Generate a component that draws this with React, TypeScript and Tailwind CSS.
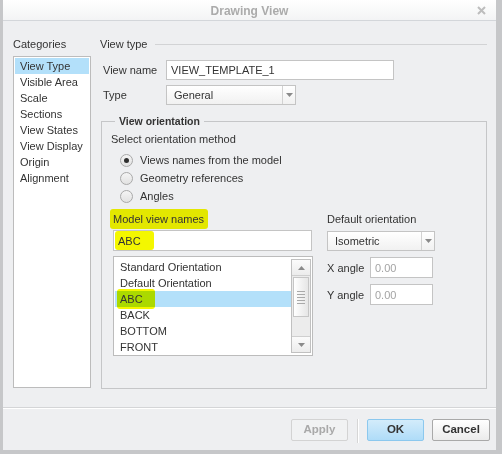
const font = { fontFamily: '"Liberation Sans", Arial, sans-serif' };

function Caret({ up = false }: { up?: boolean }) {
  return (
    <svg width="7" height="4" viewBox="0 0 7 4" className={up ? "rotate-180" : ""}>
      <path d="M0 0 L7 0 L3.5 4 Z" fill="#8a8a8a" />
    </svg>
  );
}

function Select({ value, width }: { value: string; width: string }) {
  return (
    <div
      className={`flex h-[20px] ${width} border border-[#c4c4c4] bg-gradient-to-b from-white to-[#f1f1f1]`}
    >
      <div className="flex flex-1 items-center pl-[7px] pt-px">{value}</div>
      <div className="flex w-[13px] items-center justify-center border-l border-[#d2d2d2]">
        <Caret />
      </div>
    </div>
  );
}

function Radio({ checked, label }: { checked?: boolean; label: string }) {
  return (
    <div className="flex h-[18px] items-center pl-[18px]">
      <div className="flex h-[13px] w-[13px] items-center justify-center rounded-full border border-[#a9a9a9] bg-gradient-to-b from-[#f4f4f4] to-[#e2e2e2]">
        {checked && <div className="h-[5px] w-[5px] rounded-full bg-[#2f2f2f]" />}
      </div>
      <span className="ml-[7px] pt-px">{label}</span>
    </div>
  );
}

function Marker({ children, extra = "-right-[4px]" }: { children: React.ReactNode; extra?: string }) {
  return (
    <span className="relative inline-block">
      <span
        className={`absolute -left-[3px] ${extra} -top-[2px] -bottom-[1px] rounded-[3px] bg-[#f4f700] mix-blend-multiply`}
      />
      <span className="relative">{children}</span>
    </span>
  );
}

const categories = [
  "View Type",
  "Visible Area",
  "Scale",
  "Sections",
  "View States",
  "View Display",
  "Origin",
  "Alignment",
];

const views = ["Standard Orientation", "Default Orientation", "ABC", "BACK", "BOTTOM", "FRONT"];

export default function App() {
  return (
    <div
      style={font}
      className="flex h-[454px] w-[502px] flex-col bg-[#c6c7c9] pb-[4px] pl-[3px] pr-[6px] text-[11px] text-[#333]"
    >
      <div className="flex flex-1 flex-col bg-[#eeeff1]">
        {/* title bar */}
        <div className="relative flex h-[21px] items-center justify-center border-b border-[#d3d6da] bg-gradient-to-b from-white to-[#f3f4f5]">
          <span className="pt-px text-[12px] font-bold text-[#ababab]">Drawing View</span>
          <svg width="9" height="9" viewBox="0 0 9 9" className="absolute right-[10px] top-[6px]">
            <path d="M1 1 L8 8 M8 1 L1 8" stroke="#bdbdbd" strokeWidth="2" />
          </svg>
        </div>

        {/* body */}
        <div className="flex h-[386px]">
          {/* categories */}
          <div className="ml-[10px] flex w-[78px] flex-col pt-[15px]">
            <div className="flex h-[16px] items-center pt-px">Categories</div>
            <div className="mt-[4px] h-[332px] border border-[#bcbcbc] bg-white p-[1px]">
              {categories.map((c, i) => (
                <div
                  key={c}
                  className={`flex h-[16px] items-center pl-[5px] pt-px ${i === 0 ? "bg-[#b3e0fa]" : ""}`}
                >
                  {c}
                </div>
              ))}
            </div>
          </div>

          {/* main */}
          <div className="ml-[9px] flex w-[387px] flex-col pt-[15px]">
            <div className="flex h-[16px] items-center">
              <span className="pt-px">View type</span>
              <div className="ml-[7px] h-px flex-1 bg-[#d2d3d5]" />
            </div>

            <div className="mt-[8px] flex h-[20px] items-center">
              <span className="w-[66px] pl-[3px] pt-px">View name</span>
              <div className="flex h-[20px] w-[228px] items-center border border-[#c4c4c4] bg-white pl-[4px] pt-px">
                VIEW_TEMPLATE_1
              </div>
            </div>

            <div className="mt-[5px] flex h-[20px] items-center">
              <span className="w-[66px] pl-[3px] pt-px">Type</span>
              <Select value="General" width="w-[130px]" />
            </div>

            <div className="relative ml-[1px] mt-[16px] h-[268px] border border-[#c5c6c8] pl-[11px] pt-[9px]">
              <span className="absolute -top-[8px] left-[13px] bg-[#eeeff1] px-[4px] text-[10.5px] font-bold">
                View orientation
              </span>
              <div className="-ml-[2px] flex h-[16px] items-center pt-px">Select orientation method</div>
              <div className="-ml-[11px] mt-[4px] flex flex-col">
                <Radio checked label="Views names from the model" />
                <Radio label="Geometry references" />
                <Radio label="Angles" />
              </div>

              <div className="mt-[6px] flex">
                {/* model views */}
                <div className="flex w-[200px] flex-col">
                  <div className="flex h-[16px] items-center pt-px">
                    <Marker>Model view names</Marker>
                  </div>
                  <div className="mt-[3px] flex h-[21px] w-[199px] items-center border border-[#c4c4c4] bg-white pl-[4px] pt-px">
                    <Marker extra="-right-[13px]">ABC</Marker>
                  </div>
                  <div className="mt-[5px] flex h-[100px] border border-[#bcbcbc] bg-white py-[2px] pl-[1px] pr-[1px]">
                    <div className="flex flex-1 flex-col">
                      {views.map((v, i) => (
                        <div
                          key={v}
                          className={`flex h-[16px] shrink-0 items-center pl-[5px] pt-px ${i === 2 ? "bg-[#b3e0fa]" : ""}`}
                        >
                          {i === 2 ? <Marker extra="-right-[12px]">{v}</Marker> : v}
                        </div>
                      ))}
                    </div>
                    <div className="flex w-[20px] flex-col border border-[#c0c0c0] bg-[#ececec]">
                      <div className="flex h-[16px] items-center justify-center border-b border-[#cfcfcf] bg-gradient-to-b from-[#fbfbfb] to-[#ececec]">
                        <Caret up />
                      </div>
                      <div className="mx-px mt-px flex h-[40px] flex-col items-center justify-center gap-[2px] border border-[#c6c6c6] bg-gradient-to-r from-white to-[#e6e6e6]">
                        {[0, 1, 2, 3, 4].map((k) => (
                          <div key={k} className="h-px w-[8px] bg-[#a9a9a9]" />
                        ))}
                      </div>
                      <div className="flex-1" />
                      <div className="flex h-[16px] items-center justify-center border-t border-[#cfcfcf] bg-gradient-to-b from-[#fbfbfb] to-[#ececec]">
                        <Caret />
                      </div>
                    </div>
                  </div>
                </div>

                {/* default orientation */}
                <div className="ml-[14px] flex w-[107px] flex-col">
                  <div className="flex h-[16px] items-center pt-px">Default orientation</div>
                  <div className="mt-[4px]">
                    <Select value="Isometric" width="w-[108px]" />
                  </div>
                  <div className="mt-[6px] flex items-center">
                    <span className="w-[43px] pt-px">X angle</span>
                    <div className="flex h-[21px] w-[63px] items-center border border-[#c4c4c4] bg-white pl-[4px] pt-px text-[#a4a4a4]">
                      0.00
                    </div>
                  </div>
                  <div className="mt-[6px] flex items-center">
                    <span className="w-[43px] pt-px">Y angle</span>
                    <div className="flex h-[21px] w-[63px] items-center border border-[#c4c4c4] bg-white pl-[4px] pt-px text-[#a4a4a4]">
                      0.00
                    </div>
                  </div>
                </div>
              </div>
            </div>
          </div>
        </div>

        {/* footer */}
        <div className="flex flex-1 items-start justify-end border-t border-[#d4d5d7] pr-[6px] pt-[11px] shadow-[inset_0_1px_0_#ffffff]">
          <button className="h-[22px] w-[57px] rounded-[2px] border border-[#d3d3d3] bg-[#f1f2f3] text-[11.5px] font-bold text-[#a9a9a9]">
            Apply
          </button>
          <div className="mx-[9px] h-[24px] w-px bg-[#d6d6d6] shadow-[1px_0_0_#fff]" />
          <button className="h-[22px] w-[57px] rounded-[2px] border border-[#8cc8ee] bg-gradient-to-b from-[#d3ecfb] to-[#afdcf8] text-[11.5px] font-bold">
            OK
          </button>
          <button className="ml-[8px] h-[22px] w-[58px] rounded-[2px] border border-[#a9a9a9] bg-gradient-to-b from-white to-[#ebebeb] text-[11.5px] font-bold">
            Cancel
          </button>
        </div>
      </div>
    </div>
  );
}
